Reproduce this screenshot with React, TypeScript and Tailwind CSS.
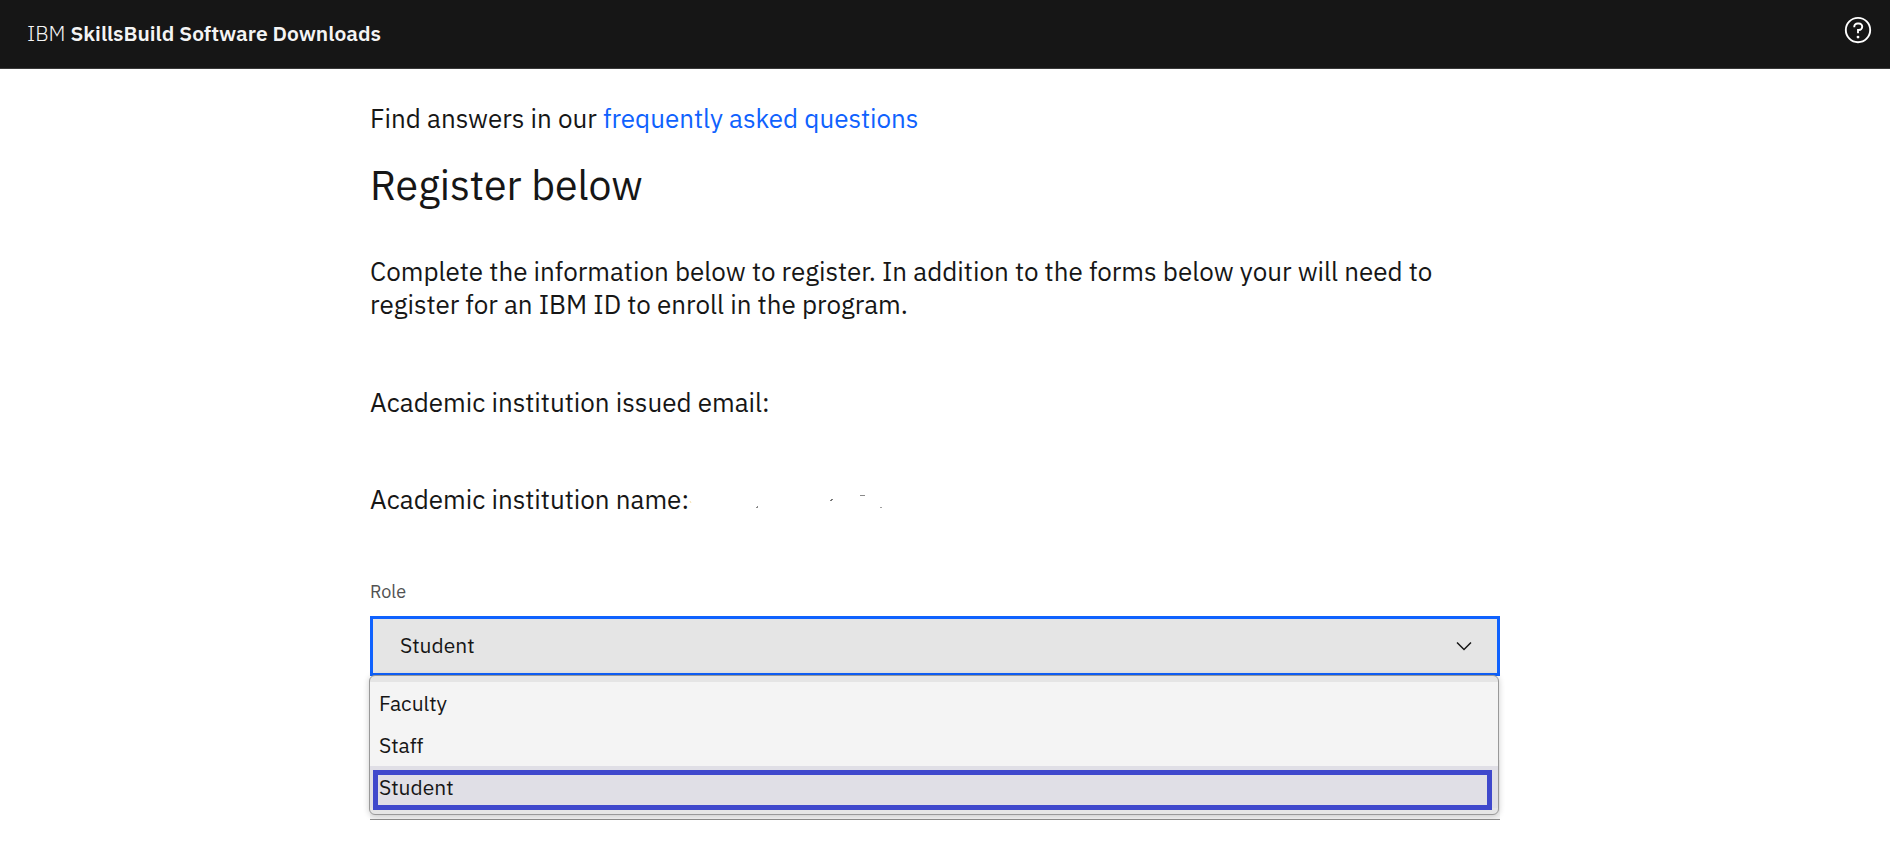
import { useState } from "react";

const roles = ["Faculty", "Staff", "Student"];

function HelpIcon() {
  return (
    <svg viewBox="0 0 32 32" className="size-[30px]" fill="currentColor" aria-hidden="true">
      <path d="M16 2a14 14 0 1 0 14 14A14 14 0 0 0 16 2Zm0 26a12 12 0 1 1 12-12 12 12 0 0 1-12 12Z" />
      <circle cx="16" cy="23.5" r="1.5" />
      <path d="M17 8h-1.5a4.49 4.49 0 0 0-4.5 4.5v.5h2v-.5a2.5 2.5 0 0 1 2.5-2.5H17a2.5 2.5 0 0 1 0 5h-2v4.5h2V17a4.5 4.5 0 0 0 0-9Z" />
    </svg>
  );
}

function Chevron() {
  return (
    <svg viewBox="0 0 16 16" className="size-6" fill="currentColor" aria-hidden="true">
      <path d="M8 11 3 6l.7-.7L8 9.6l4.3-4.3.7.7z" />
    </svg>
  );
}

function RedactedName() {
  return (
    <svg viewBox="0 0 200 16" className="h-4 w-[200px]" fill="none" aria-hidden="true">
      <path d="M1 9l1 2" stroke="#f3dfae" />
      <path d="M67 15.500h2M68.500 14v2" stroke="#8a8a8a" />
      <path d="M141 8.500h2M142 7.500h2" stroke="#777777" />
      <path d="M171 3.500h5" stroke="#8a8a8a" />
      <path d="M191 15.500h2" stroke="#a0a0a0" />
    </svg>
  );
}

export default function App() {
  const [role, setRole] = useState("Student");

  return (
    <div className="font-['IBM_Plex_Sans','Noto_Sans',sans-serif] text-[#161616]">
      <header className="flex h-[69px] items-center justify-between border-b border-[#393939] bg-[#161616] pr-[17px] pl-[27px] text-[#f4f4f4]">
        <a href="#" className="pb-[2px] text-[21px] leading-7">
          <span className="font-light">IBM</span> <span className="font-semibold">SkillsBuild Software Downloads</span>
        </a>
        <button type="button" aria-label="Help" className="pb-2 text-white">
          <HelpIcon />
        </button>
      </header>

      <main className="pt-[33px] pr-[390px] pl-[370px] text-[26px] leading-[33px]">
        <p>
          Find answers in our{" "}
          <a href="#" className="text-[#0f62fe]">
            frequently asked questions
          </a>
        </p>
        <h1 className="mt-[25px] text-[41px] leading-[50px]">Register below</h1>
        <p className="mt-[45px]">
          Complete the information below to register. In addition to the forms below your will need to register for an IBM ID to enroll in the program.
        </p>
        <p className="mt-[65px]">Academic institution issued email:</p>
        <p className="mt-16 flex items-center">
          Academic institution name: <RedactedName />
        </p>

        <label htmlFor="role" className="mt-16 block text-[18px] leading-6 text-[#525252]">
          Role
        </label>
        <div className="relative mt-3">
          <div className="relative flex items-center">
            <select
              id="role"
              value={role}
              onChange={(e) => setRole(e.target.value)}
              className="h-[60px] w-full appearance-none border-[3px] border-[#0f62fe] bg-[#e5e5e5] pr-16 pb-[2px] pl-[27px] text-[21px] outline-none"
            >
              {roles.map((r) => (
                <option key={r}>{r}</option>
              ))}
            </select>
            <span className="pointer-events-none absolute right-6">
              <Chevron />
            </span>
          </div>

          <select aria-label="Program" className="mt-[84px] block h-[60px] w-full appearance-none border-b border-[#8d8d8d] bg-[#f4f4f4]" />

          <ul
            role="listbox"
            aria-label="Role"
            className="absolute top-[59px] right-px -left-px rounded-md border border-[#999999] bg-[#e5e5e5] py-[6px] text-[21px] leading-[42px] shadow-[0_1px_6px_rgba(0,0,0,0.2)]"
          >
            {roles.map((r) => (
              <li
                key={r}
                role="option"
                aria-selected={r === role}
                onClick={() => setRole(r)}
                className={r === role ? "relative bg-[#e0dfe6] px-[9px]" : "bg-[#f4f4f4] px-[9px]"}
              >
                {r}
                {r === role && <span className="absolute top-1 right-[6px] -bottom-[2px] left-[3px] border-[5px] border-[#3f48cc]" />}
              </li>
            ))}
          </ul>
        </div>
      </main>
    </div>
  );
}
